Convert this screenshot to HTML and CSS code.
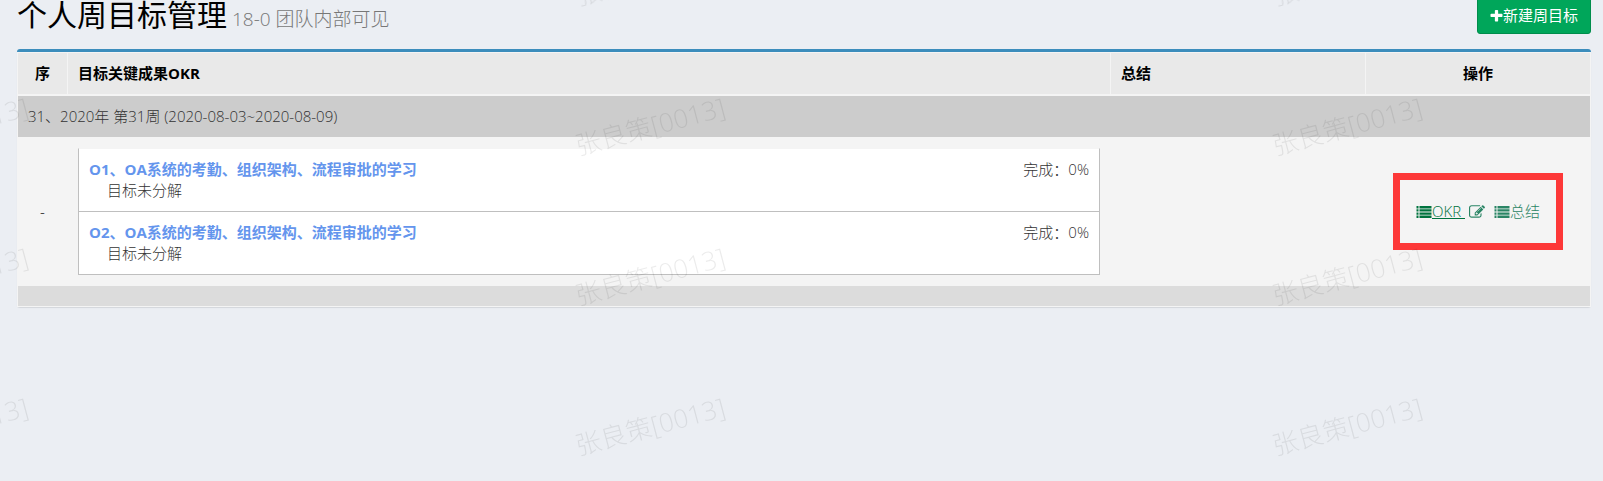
FILE: index.html
```
<!DOCTYPE html>
<html lang="zh-CN">
<head>
    <meta charset="UTF-8">
    <meta name="viewport" content="width=device-width, initial-scale=1.0">
    <title>个人周目标管理</title>
    <link rel="stylesheet" href="styles.css">
</head>
<body>
    <svg class="icon-defs" aria-hidden="true">
        <symbol id="icon-plus" viewBox="0 0 1408 1408">
            <path d="M1408 544v192q0 40-28 68t-68 28H896v416q0 40-28 68t-68 28H608q-40 0-68-28t-28-68V832H96q-40 0-68-28T0 736V544q0-40 28-68t68-28h416V96q0-40 28-68t68-28h192q40 0 68 28t28 68v352h416q40 0 68 28t28 68z"/>
        </symbol>
        <symbol id="icon-list" viewBox="0 0 15 12">
            <path d="M0 0h2v2.400H0zM3 0h12v2.400H3zM0 3.200h2v2.400H0zM3 3.200h12v2.400H3zM0 6.400h2v2.400H0zM3 6.400h12v2.400H3zM0 9.600h2V12H0zM3 9.600h12V12H3z"/>
        </symbol>
        <symbol id="icon-edit" viewBox="0 0 1792 1792">
            <path d="M888 1184l116-116-152-152-116 116v56h96v96h56zm440-720q-16-16-33 1L945 815q-17 17-1 33t33-1l350-350q17-17 1-33zm80 594v190q0 119-84.500 203.500T1120 1536H288q-119 0-203.500-84.500T0 1248V416q0-119 84.500-203.500T288 128h832q63 0 117 25 15 7 18 23 3 17-9 29l-49 49q-14 14-32 8-23-6-45-6H288q-66 0-113 47t-47 113v832q0 66 47 113t113 47h832q66 0 113-47t47-113v-126q0-13 9-22l64-64q15-15 35-7t20 29zm-96-738l288 288-672 672H640V992zm444 132l-92 92-288-288 92-92q28-28 68-28t68 28l152 152q28 28 28 68t-28 68z"/>
        </symbol>
    </svg>

    <header class="content-header">
        <h1 class="page-title">个人周目标管理 <small>18-0 团队内部可见</small></h1>
        <button type="button" class="btn-add"><svg class="icon-plus" aria-hidden="true"><use href="#icon-plus"/></svg>新建周目标</button>
    </header>

    <main class="box">
        <table class="okr-table">
            <thead>
                <tr>
                    <th class="col-no">序</th>
                    <th>目标关键成果OKR</th>
                    <th class="col-summary">总结</th>
                    <th class="col-action">操作</th>
                </tr>
            </thead>
            <tbody>
                <tr class="week-row">
                    <td colspan="4">31、2020年 第31周 (2020-08-03~2020-08-09)</td>
                </tr>
                <tr>
                    <td class="col-no">-</td>
                    <td>
                        <ul class="goal-list">
                            <li>
                                <div class="goal-head">
                                    <a href="#">O1、OA系统的考勤、组织架构、流程审批的学习</a>
                                    <span>完成：0%</span>
                                </div>
                                <p>目标未分解</p>
                            </li>
                            <li>
                                <div class="goal-head">
                                    <a href="#">O2、OA系统的考勤、组织架构、流程审批的学习</a>
                                    <span>完成：0%</span>
                                </div>
                                <p>目标未分解</p>
                            </li>
                        </ul>
                    </td>
                    <td></td>
                    <td class="col-action">
                        <div class="actions">
                            <a href="#" class="active"><svg class="icon" aria-hidden="true"><use href="#icon-list"/></svg><span>OKR&nbsp;</span></a>
                            <a href="#" aria-label="编辑"><svg class="icon icon-edit" aria-hidden="true"><use href="#icon-edit"/></svg></a>
                            <a href="#"><svg class="icon" aria-hidden="true"><use href="#icon-list"/></svg><span>总结</span></a>
                        </div>
                    </td>
                </tr>
            </tbody>
            <tfoot>
                <tr>
                    <td colspan="4"></td>
                </tr>
            </tfoot>
        </table>
    </main>

    <!-- 水印 -->
    <div class="watermark" aria-hidden="true">
        <span>张良策[0013]</span><span>张良策[0013]</span><span>张良策[0013]</span>
        <span>张良策[0013]</span><span>张良策[0013]</span><span>张良策[0013]</span>
        <span>张良策[0013]</span><span>张良策[0013]</span><span>张良策[0013]</span>
        <span>张良策[0013]</span><span>张良策[0013]</span><span>张良策[0013]</span>
    </div>
</body>
</html>
```
FILE: styles.css
```
* {
    box-sizing: border-box;
}
body {
    margin: 0;
    padding: 0 12px 0 17px;
    min-height: 100vh;
    overflow: hidden;
    background-color: #ebeef3;
    color: #333;
    font-family: "Open Sans", "Noto Sans CJK SC", sans-serif;
    font-size: 15px;
    font-weight: 300;
    line-height: 21px;
}
a {
    color: #2a8565;
    text-decoration: none;
}
.icon-defs {
    display: none;
}

/* 頁首 */
.content-header {
    display: flex;
    justify-content: space-between;
    align-items: flex-start;
    height: 52px;
    margin-top: -3px;
}
.page-title {
    display: flex;
    align-items: baseline;
    gap: 5px;
    margin: 0;
    color: #000;
    font-size: 30px;
    font-weight: 400;
    line-height: 36px;
}
.page-title small {
    color: #777;
    font-size: 19px;
    font-weight: 300;
}
.btn-add {
    display: flex;
    align-items: center;
    height: 37px;
    padding: 0 12px;
    border: 1px solid #008d4c;
    border-radius: 3px;
    background-color: #00a65a;
    color: #fff;
    font-family: inherit;
    font-size: 15px;
    font-weight: 400;
    line-height: 21px;
}
.icon-plus {
    width: 13px;
    height: 12px;
    fill: currentColor;
}

/* 表格 */
.box {
    border-top: 3px solid #3c8dbc;
    border-radius: 3px;
    background-color: #f4f4f4;
    box-shadow: 0 1px 1px rgba(0, 0, 0, 0.1);
}
.okr-table {
    width: 100%;
    border: 1px solid #f4f4f4;
    border-collapse: collapse;
}
th, td {
    padding: 10px;
    border: 1px solid #f4f4f4;
    text-align: left;
}
th {
    border-bottom-width: 2px;
    background-color: #e9e9e9;
    color: #000;
    font-weight: 700;
}
.okr-table .col-no {
    width: 50px;
    color: #000;
    text-align: center;
}
.col-summary {
    width: 255px;
}
.okr-table .col-action {
    width: 225px;
    text-align: center;
}
.week-row td {
    background-color: #ccc;
}
tfoot td {
    height: 21px;
    padding: 0;
    background-color: #dcdcdc;
}

.goal-list {
    margin: 0;
    padding: 0;
    border: 1px solid #bfbfbf;
    border-top-color: #f4f4f4;
    background-color: #fff;
    list-style: none;
}
.goal-list li {
    padding: 10px;
}
.goal-list li + li {
    border-top: 1px solid #bfbfbf;
}
.goal-list p {
    margin: 0;
    padding-left: 18px;
}
.goal-head {
    display: flex;
    justify-content: space-between;
}
.goal-head a {
    color: #6495ed;
    font-weight: 700;
}

.actions {
    display: inline-flex;
    gap: 9px;
    padding: 21px 16px;
    border: 7px solid #fd3838;
    vertical-align: middle;
}
.actions a {
    display: flex;
    align-items: center;
}
.actions .active {
    margin-right: -5px;
    color: #00733e;
}
.active span {
    text-decoration: underline;
}
.icon {
    width: 16px;
    height: 12px;
    fill: currentColor;
}
.icon-edit {
    height: 16px;
}

.watermark {
    position: fixed;
    top: -24px;
    left: -396px;
    display: grid;
    grid-template-columns: repeat(3, 697px);
    grid-auto-rows: 150px;
    place-items: start center;
    color: rgba(0, 0, 0, 0.08);
    font-size: 26px;
    line-height: 0;
    pointer-events: none;
}
.watermark span {
    transform: rotate(-15deg);
}
```
